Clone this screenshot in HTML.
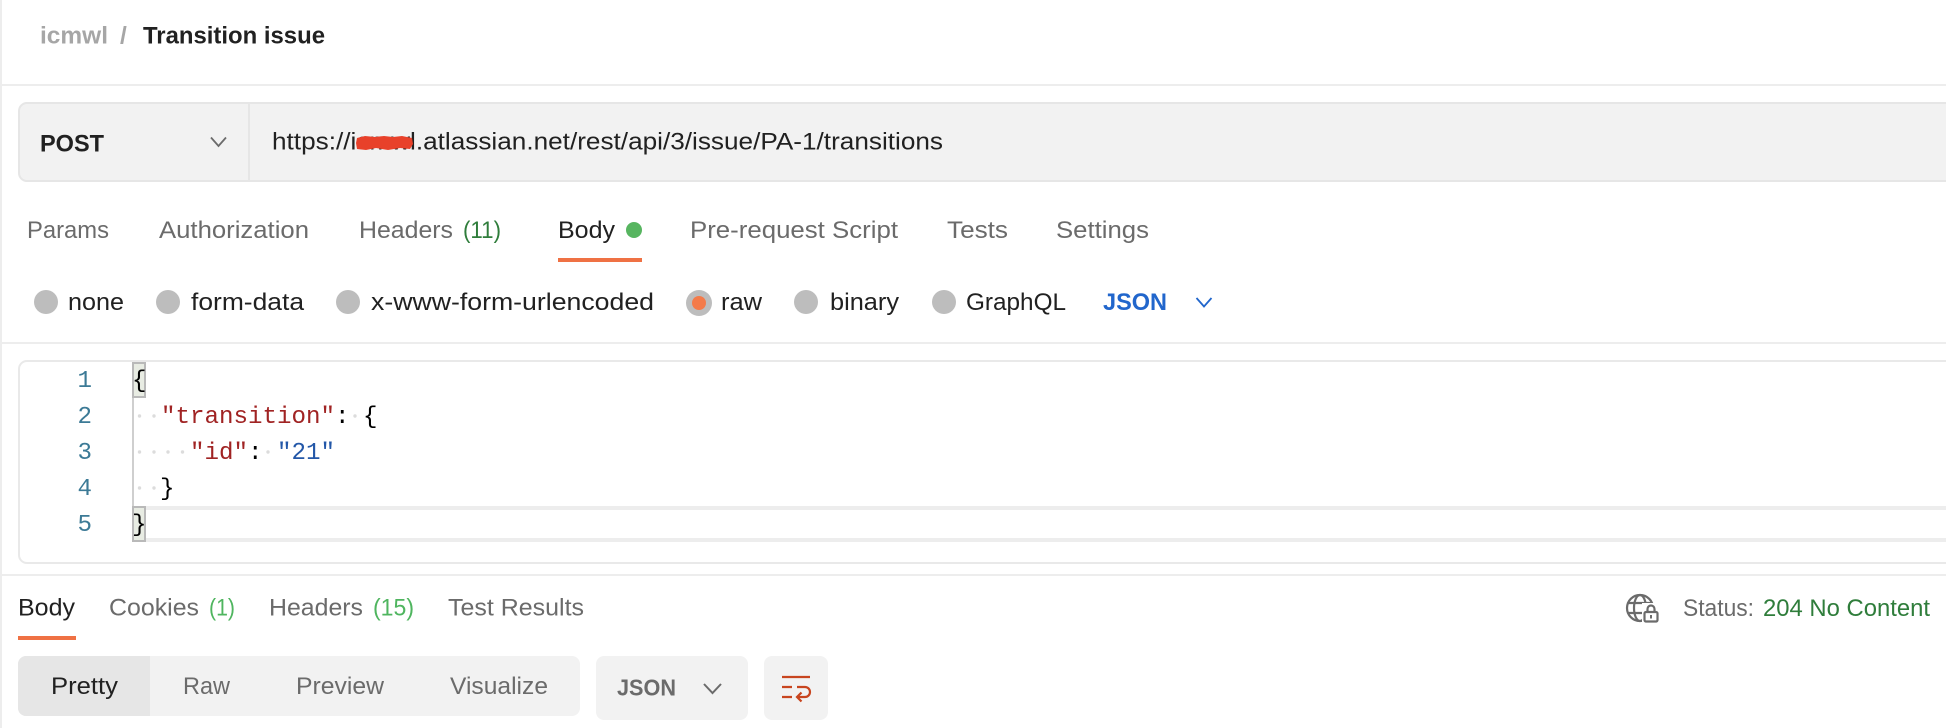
<!DOCTYPE html>
<html lang="en">
<head>
<meta charset="utf-8">
<title>Transition issue</title>
<style>
html,body{margin:0;padding:0;background:#fff;width:1946px;height:728px;overflow:hidden}
svg{display:block;filter:blur(0.35px)}
text{font-family:"Liberation Sans",sans-serif;font-size:24.5px;fill:#6b6b6b}
.d{fill:#212121}
.g{fill:#2f7d3b}
.lg{fill:#4fb55f}
.m{font-family:"Liberation Mono",monospace;font-size:24.17px;fill:#000}
.ln{font-family:"Liberation Mono",monospace;font-size:24.17px;fill:#3c7a96}
.k{fill:#a02323}
.s{fill:#2357a8}
</style>
</head>
<body>
<svg width="1946" height="728" viewBox="0 0 1946 728" xmlns="http://www.w3.org/2000/svg">
<rect width="1946" height="728" fill="#fff"/>
<rect x="0" y="0" width="2" height="728" fill="#ededed"/>

<!-- breadcrumb -->
<text x="40" y="43.500" textLength="68" lengthAdjust="spacingAndGlyphs" style="fill:#a6a6a6;font-weight:bold">icmwl</text>
<text x="120" y="43.500" style="fill:#a6a6a6;font-weight:bold">/</text>
<text x="143" y="43.500" textLength="182" lengthAdjust="spacingAndGlyphs" class="d" style="font-weight:bold">Transition issue</text>
<rect x="2" y="84" width="1944" height="2" fill="#ededed"/>

<!-- url bar -->
<rect x="19" y="103" width="1940" height="78" rx="8" fill="#f2f2f2" stroke="#e6e6e6" stroke-width="2"/>
<rect x="248" y="104" width="2" height="76" fill="#e6e6e6"/>
<text x="40" y="151.500" textLength="64" lengthAdjust="spacingAndGlyphs" class="d" style="font-weight:bold">POST</text>
<path d="M211 137.500l7.500 8.500 7.500-8.500" fill="none" stroke="#6b6b6b" stroke-width="1.800"/>
<text x="272" y="149.500" textLength="671" lengthAdjust="spacingAndGlyphs" class="d">https://icmwl.atlassian.net/rest/api/3/issue/PA-1/transitions</text>
<path d="M357 138l8-2 10 1 9-1 9 1 9-1 10 2 1 6-3 5-10-1-12 2-12-2-10 2-9-1-1-6z" fill="#e8412a"/>

<!-- request tabs -->
<text x="27" y="238" textLength="82" lengthAdjust="spacingAndGlyphs">Params</text>
<text x="159" y="238" textLength="150" lengthAdjust="spacingAndGlyphs">Authorization</text>
<text x="359" y="238" textLength="94" lengthAdjust="spacingAndGlyphs">Headers</text>
<text x="463" y="238" textLength="38" lengthAdjust="spacingAndGlyphs" class="g">(11)</text>
<text x="558" y="238" textLength="57" lengthAdjust="spacingAndGlyphs" class="d">Body</text>
<circle cx="634" cy="230" r="8" fill="#57b560"/>
<text x="690" y="238" textLength="208" lengthAdjust="spacingAndGlyphs">Pre-request Script</text>
<text x="947" y="238" textLength="61" lengthAdjust="spacingAndGlyphs">Tests</text>
<text x="1056" y="238" textLength="93" lengthAdjust="spacingAndGlyphs">Settings</text>
<rect x="558" y="258" width="84" height="4" fill="#ef7144"/>

<!-- body type radios -->
<circle cx="46" cy="302" r="12" fill="#bdbdbd"/>
<text x="68" y="310" textLength="56" lengthAdjust="spacingAndGlyphs" class="d">none</text>
<circle cx="168" cy="302" r="12" fill="#bdbdbd"/>
<text x="191" y="310" textLength="113" lengthAdjust="spacingAndGlyphs" class="d">form-data</text>
<circle cx="348" cy="302" r="12" fill="#bdbdbd"/>
<text x="371" y="310" textLength="283" lengthAdjust="spacingAndGlyphs" class="d">x-www-form-urlencoded</text>
<circle cx="699" cy="303" r="13" fill="#bdbdbd"/>
<circle cx="699" cy="303" r="7" fill="#f47b4a"/>
<text x="721" y="310" textLength="41" lengthAdjust="spacingAndGlyphs" class="d">raw</text>
<circle cx="806" cy="302" r="12" fill="#bdbdbd"/>
<text x="830" y="310" textLength="69" lengthAdjust="spacingAndGlyphs" class="d">binary</text>
<circle cx="944" cy="302" r="12" fill="#bdbdbd"/>
<text x="966" y="310" textLength="100" lengthAdjust="spacingAndGlyphs" class="d">GraphQL</text>
<text x="1103" y="310" textLength="64" lengthAdjust="spacingAndGlyphs" style="fill:#2166cc;font-weight:bold">JSON</text>
<path d="M1196.500 298l7.500 8.500 7.500-8.500" fill="none" stroke="#2166cc" stroke-width="1.800"/>
<rect x="2" y="342" width="1944" height="2" fill="#ededed"/>

<!-- editor -->
<rect x="19" y="361" width="1940" height="202" rx="8" fill="#fff" stroke="#e9e9e9" stroke-width="2"/>
<rect x="146" y="506" width="1800" height="4" fill="#ededed"/>
<rect x="146" y="538" width="1800" height="4" fill="#ededed"/>
<rect x="132" y="398" width="2" height="108" fill="#cfcfcf"/>
<rect x="133" y="363" width="12" height="34" fill="#e8ece3" stroke="#b9b9b9" stroke-width="2"/>
<rect x="133" y="507" width="12" height="34" fill="#e8ece3" stroke="#b9b9b9" stroke-width="2"/>

<text x="77.500" y="387" class="ln">1</text>
<text x="77.500" y="423" class="ln">2</text>
<text x="77.500" y="459" class="ln">3</text>
<text x="77.500" y="495" class="ln">4</text>
<text x="77.500" y="531" class="ln">5</text>

<text x="132" y="387" class="m">{</text>
<g fill="#dcdcdc">
<circle cx="139.500" cy="416" r="1.700"/><circle cx="154" cy="416" r="1.700"/><circle cx="355" cy="416" r="1.700"/>
<circle cx="139.500" cy="452" r="1.700"/><circle cx="154" cy="452" r="1.700"/><circle cx="168" cy="452" r="1.700"/><circle cx="182.500" cy="452" r="1.700"/><circle cx="268" cy="452" r="1.700"/>
<circle cx="139.500" cy="488" r="1.700"/><circle cx="154" cy="488" r="1.700"/>
</g>
<text x="161" y="423" class="m k">"transition"</text>
<text x="335" y="423" class="m">:</text>
<text x="363" y="423" class="m">{</text>
<text x="190" y="459" class="m k">"id"</text>
<text x="248" y="459" class="m">:</text>
<text x="277" y="459" class="m s">"21"</text>
<text x="160" y="495" class="m">}</text>
<text x="132" y="531" class="m">}</text>
<rect x="2" y="574" width="1944" height="2" fill="#ededed"/>

<!-- response tabs -->
<text x="18" y="615.500" textLength="57" lengthAdjust="spacingAndGlyphs" class="d">Body</text>
<text x="109" y="615.500" textLength="90" lengthAdjust="spacingAndGlyphs">Cookies</text>
<text x="209" y="615.500" textLength="26" lengthAdjust="spacingAndGlyphs" class="lg">(1)</text>
<text x="269" y="615.500" textLength="94" lengthAdjust="spacingAndGlyphs">Headers</text>
<text x="373" y="615.500" textLength="41" lengthAdjust="spacingAndGlyphs" class="lg">(15)</text>
<text x="448" y="615.500" textLength="136" lengthAdjust="spacingAndGlyphs">Test Results</text>
<rect x="18" y="636" width="58" height="4" fill="#ef7144"/>

<!-- status -->
<g fill="none" stroke="#6b6b6b" stroke-width="2.200">
<circle cx="1640" cy="608" r="13"/>
<ellipse cx="1640" cy="608" rx="6" ry="13"/>
<path d="M1628 603h24M1628 613h24"/>
</g>
<rect x="1642" y="603" width="18" height="21" fill="#fff"/>
<rect x="1644.500" y="612" width="13" height="9.500" rx="1.500" fill="#fff" stroke="#6b6b6b" stroke-width="2.200"/>
<path d="M1647.500 612v-3a3.500 3.500 0 0 1 7 0v3" fill="none" stroke="#6b6b6b" stroke-width="2.200"/>
<rect x="1650" y="615" width="2" height="3.500" fill="#6b6b6b"/>
<text x="1683" y="616" textLength="71" lengthAdjust="spacingAndGlyphs">Status:</text>
<text x="1763" y="616" textLength="167" lengthAdjust="spacingAndGlyphs" class="g">204 No Content</text>

<!-- segmented control -->
<rect x="18" y="656" width="562" height="60" rx="8" fill="#f2f2f2"/>
<path d="M150 656H26a8 8 0 0 0-8 8v44a8 8 0 0 0 8 8h124z" fill="#e6e6e6"/>
<text x="51" y="694" textLength="67" lengthAdjust="spacingAndGlyphs" class="d">Pretty</text>
<text x="183" y="694" textLength="47" lengthAdjust="spacingAndGlyphs">Raw</text>
<text x="296" y="694" textLength="88" lengthAdjust="spacingAndGlyphs">Preview</text>
<text x="450" y="694" textLength="98" lengthAdjust="spacingAndGlyphs">Visualize</text>

<!-- JSON select -->
<rect x="596" y="656" width="152" height="64" rx="8" fill="#f2f2f2"/>
<text x="617" y="695.500" textLength="59" lengthAdjust="spacingAndGlyphs" style="font-weight:bold;font-size:23px">JSON</text>
<path d="M704 684l8.500 9 8.500-9" fill="none" stroke="#6b6b6b" stroke-width="2"/>

<!-- wrap button -->
<rect x="764" y="656" width="64" height="64" rx="8" fill="#f2f2f2"/>
<path d="M782 677h28M782 687h10M797 687h8a5 5 0 0 1 0 10h-8M782 697h10M801.500 692.500l-4.500 4.500 4.500 4.500" fill="none" stroke="#c8451f" stroke-width="2.200"/>
</svg>
</body>
</html>
